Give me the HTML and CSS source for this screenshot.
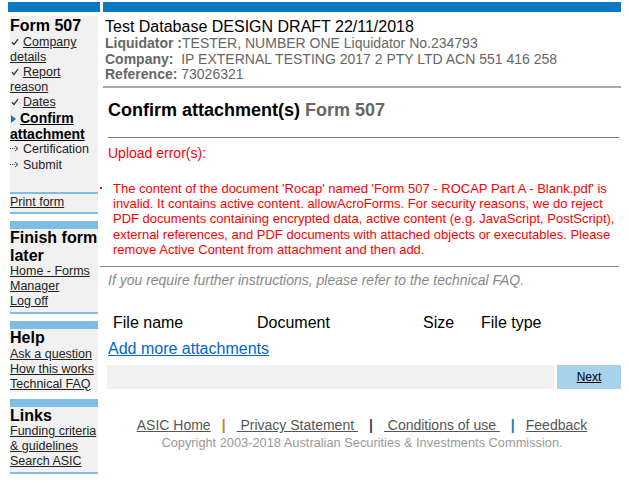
FILE: index.html
```html
<!DOCTYPE html>
<html>
<head>
<meta charset="utf-8">
<link rel="stylesheet" href="styles.css">
</head>
<body>
<div class="topbars"><div class="bar-left"></div><div class="bar-right"></div></div>
<div class="page">
  <aside class="sidebar">
    <div class="box nav">
      <div class="box-title">Form 507</div>
      <div class="step"><svg class="ico-check" width="8" height="8" viewBox="0 0 8 8"><path d="M1 4.3 L3 6.5 L7 1.2" fill="none" stroke="#333" stroke-width="1.3"/></svg><a href="#">Company details</a></div>
      <div class="step"><svg class="ico-check" width="8" height="8" viewBox="0 0 8 8"><path d="M1 4.3 L3 6.5 L7 1.2" fill="none" stroke="#333" stroke-width="1.3"/></svg><a href="#">Report reason</a></div>
      <div class="step"><svg class="ico-check" width="8" height="8" viewBox="0 0 8 8"><path d="M1 4.3 L3 6.5 L7 1.2" fill="none" stroke="#333" stroke-width="1.3"/></svg><a href="#">Dates</a></div>
      <div class="step current"><svg class="ico-tri" width="5" height="8" viewBox="0 0 5 8"><path d="M0 0 L5 4 L0 8 Z" fill="#1b75bb"/></svg><a href="#">Confirm attachment</a></div>
      <div class="step todo"><svg class="ico-arrow" width="9" height="7" viewBox="0 0 9 7"><path d="M0 3.5 H6.5" stroke="#444" stroke-width="1" stroke-dasharray="1 1"/><path d="M5 1 L8 3.5 L5 6" fill="none" stroke="#444" stroke-width="1"/></svg>Certification</div>
      <div class="step todo"><svg class="ico-arrow" width="9" height="7" viewBox="0 0 9 7"><path d="M0 3.5 H6.5" stroke="#444" stroke-width="1" stroke-dasharray="1 1"/><path d="M5 1 L8 3.5 L5 6" fill="none" stroke="#444" stroke-width="1"/></svg>Submit</div>
      <div class="print"><a href="#">Print form</a></div>
    </div>
    <div class="box section lined">
      <div class="box-title">Finish form later</div>
      <a href="#">Home - Forms Manager</a><br>
      <a href="#">Log off</a>
    </div>
    <div class="box section">
      <div class="box-title">Help</div>
      <a href="#">Ask a question</a><br>
      <a href="#">How this works</a><br>
      <a href="#">Technical FAQ</a>
    </div>
    <div class="box section lined">
      <div class="box-title">Links</div>
      <a href="#">Funding criteria &amp; guidelines</a><br>
      <a href="#">Search ASIC</a>
    </div>
  </aside>
  <main class="main">
    <div class="header">
      <div class="db-title">Test Database DESIGN DRAFT 22/11/2018</div>
      <div class="info"><b>Liquidator :</b>TESTER, NUMBER ONE Liquidator No.234793</div>
      <div class="info"><b>Company:</b>&nbsp; IP EXTERNAL TESTING 2017 2 PTY LTD ACN 551 416 258</div>
      <div class="info"><b>Reference:</b> 73026321</div>
    </div>
    <div class="content">
      <h1 class="heading">Confirm attachment(s) <span class="form-no">Form 507</span></h1>
      <div class="upload-title">Upload error(s):</div>
      <ul class="errors">
        <li>The content of the document 'Rocap' named 'Form 507 - ROCAP Part A - Blank.pdf' is invalid. It contains active content. allowAcroForms. For security reasons, we do reject PDF documents containing encrypted data, active content (e.g. JavaScript, PostScript), external references, and PDF documents with attached objects or executables. Please remove Active Content from attachment and then add.</li>
      </ul>
      <div class="instructions">If you require further instructions, please refer to the technical FAQ.</div>
      <div class="file-head">
        <span>File name</span><span>Document</span><span>Size</span><span>File type</span>
      </div>
      <a class="add-more" href="#">Add more attachments</a>
      <div class="actions">
        <div class="actions-fill"></div>
        <a class="next" href="#">Next</a>
      </div>
    </div>
    <footer class="footer">
      <div class="footer-links">
        <a href="#">ASIC Home</a><span class="pipe p1">|</span><a href="#">&nbsp;Privacy Statement&nbsp;</a><span class="pipe p2">|</span><a href="#">&nbsp;Conditions of use&nbsp;</a><span class="pipe p3">|</span><a href="#">Feedback</a>
      </div>
      <div class="copyright">Copyright 2003-2018 Australian Securities &amp; Investments Commission.</div>
    </footer>
  </main>
</div>
</body>
</html>
```

FILE: styles.css
```css
html, body {
  background: #fff;
}
body {
  margin: 2px 8px 0 8px;
  font-family: "Liberation Sans", Arial, sans-serif;
  color: #000;
}
a {
  color: inherit;
}

.topbars {
  display: flex;
  gap: 3px;
  height: 10px;
}
.bar-left {
  width: 92px;
  background: #0b79c1;
}
.bar-right {
  flex: 1;
  background: #0b79c1;
}

.page {
  display: flex;
  gap: 3px;
  margin-top: 4px;
}

/* Sidebar */
.sidebar {
  width: 88px;
  padding: 0 2px;
  flex: none;
  font-size: 12.5px;
  line-height: 15px;
  color: #222;
}
.sidebar a {
  color: #222;
  text-decoration: underline;
}
.box {
  background: #f1f1f1;
}
.box-title {
  font-weight: bold;
  font-size: 16px;
  line-height: 18px;
  color: #000;
}
.nav .box-title {
  line-height: 18px;
  padding-top: 1px;
}
.step svg {
  margin-right: 4px;
}
.ico-check {
  vertical-align: 0px;
  margin-left: 1px;
}
.ico-tri {
  margin-left: 1px;
  vertical-align: 0px;
}
.ico-arrow {
  vertical-align: 1px;
}
.step.current {
  font-weight: bold;
  font-size: 14px;
  line-height: 16px;
}
.step.current a {
  color: #000;
}
.step.todo {
  line-height: 15.5px;
}
.print {
  margin-top: 19px;
  border-top: 2px solid #7fbde2;
  border-bottom: 2px solid #7fbde2;
  padding: 1px 0 2px;
  background: #f1f1f1;
}
.section {
  margin-top: 7px;
  border-top: 8px solid #7fbde2;
}
.section .box-title {
  line-height: 17.5px;
}
.section.lined {
  border-bottom: 2px solid #7fbde2;
  padding-bottom: 3px;
}

/* Main */
.main {
  flex: 1;
  min-width: 0;
}
.header {
  padding: 0 0 3.5px 2px;
  border-bottom: 2px solid #a9a9a9;
  color: #666;
}
.db-title {
  font-size: 16px;
  line-height: 19px;
  padding-top: 1px;
  color: #000;
}
.info {
  font-size: 14px;
  line-height: 15.5px;
  color: #666;
}
.info b {
  color: #666;
}

.content {
  padding: 0 2px 0 5px;
}
.heading {
  margin: 11px 0 0 0;
  font-size: 18px;
  line-height: 22px;
  font-weight: bold;
  padding: 0 0 16px 0;
  border-bottom: 1px solid #777;
}
.form-no {
  color: #666;
}
.upload-title {
  margin-top: 7px;
  color: #f00;
  font-size: 14px;
  line-height: 16px;
}
.errors {
  list-style: none;
  margin: 20px 0 0 -8px;
  padding: 0 0 9px 0;
  border-bottom: 1px solid #888;
  color: #f00;
  font-size: 13px;
  line-height: 15.2px;
}
.errors li {
  display: flex;
}
.errors li::before {
  content: "";
  flex: none;
  width: 2px;
  height: 2px;
  background: #f00;
  margin: 6px 11px 0 0;
}
.instructions {
  margin-top: 5px;
  font-style: italic;
  color: #888;
  font-size: 14px;
  line-height: 16px;
}
.file-head {
  margin-top: 26px;
  display: grid;
  grid-template-columns: 144px 166px 58px auto;
  padding-left: 5px;
  font-size: 16px;
  line-height: 18px;
}
.add-more {
  display: inline-block;
  margin-top: 8px;
  color: #0066cc;
  font-size: 16px;
  line-height: 18px;
}
.actions {
  display: flex;
  gap: 3px;
  margin: 7px -2px 0 -1px;
  height: 24px;
}
.actions-fill {
  flex: 1;
  background: #f1f1f1;
}
.next {
  width: 64px;
  background: #a8d1ea;
  color: #000;
  font-size: 12px;
  line-height: 24px;
  text-align: center;
}

.footer {
  margin-top: 28px;
  text-align: center;
}
.footer-links {
  font-size: 14px;
  line-height: 16px;
}
.footer-links a {
  color: #555;
}
.pipe {
  font-weight: bold;
  margin: 0 11px;
}
.p1 { color: #c8821e; }
.p2 { color: #444; }
.p3 { color: #1a78c2; }
.copyright {
  margin-top: 2px;
  font-size: 12.8px;
  line-height: 16px;
  color: #999;
}
```
